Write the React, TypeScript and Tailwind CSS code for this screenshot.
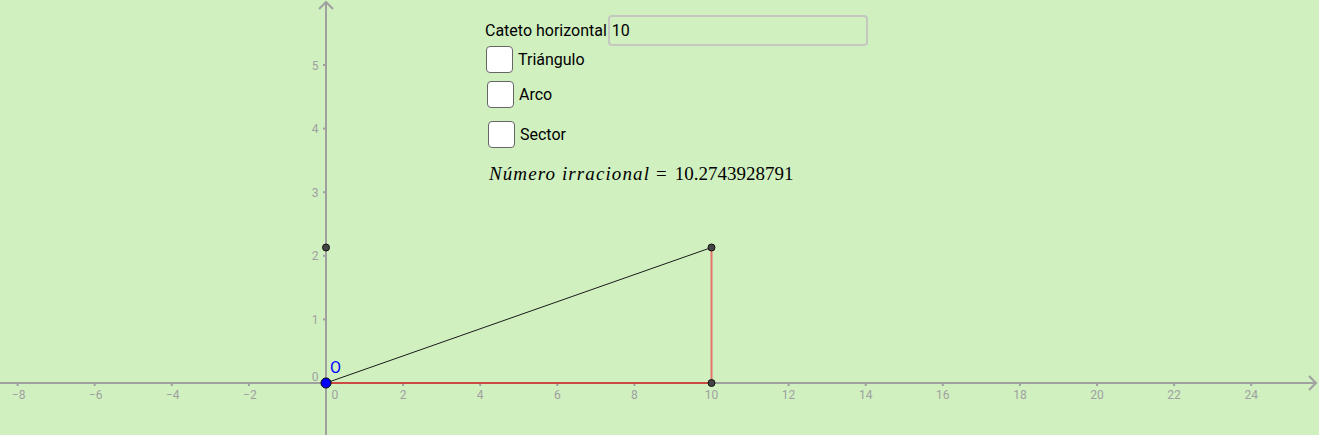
const X0 = 326;
const Y0 = 383;
const UX = 38.55;
const UY = 63.6;

const sx = (v: number) => X0 + v * UX;
const sy = (v: number) => Y0 - v * UY;

const X_TICKS = [-8, -6, -4, -2, 2, 4, 6, 8, 10, 12, 14, 16, 18, 20, 22, 24];
const Y_TICKS = [1, 2, 3, 4, 5];

const TOP_Y = 247.5;

function Graph() {
  return (
    <svg width={1319} height={435} className="absolute inset-0" style={{ fontFamily: 'Roboto, sans-serif' }}>
      {/* axes */}
      <line x1={0} y1={Y0} x2={1316} y2={Y0} stroke="#a0a0a0" strokeWidth={2} />
      <polyline points={`1309,${Y0 - 7} 1316,${Y0} 1309,${Y0 + 7}`} fill="none" stroke="#a0a0a0" strokeWidth={2} />
      <line x1={X0} y1={2} x2={X0} y2={435} stroke="#a0a0a0" strokeWidth={2} />
      <polyline points={`${X0 - 7},9 ${X0},2 ${X0 + 7},9`} fill="none" stroke="#a0a0a0" strokeWidth={2} />

      {X_TICKS.map((t) => (
        <g key={`x${t}`}>
          <line x1={sx(t)} y1={Y0} x2={sx(t)} y2={Y0 + 3} stroke="#a0a0a0" strokeWidth={2} />
          <text x={sx(t) + (t < 0 ? 1 : 0)} y={399} fontSize={12} fill="#a0a0a0" textAnchor="middle">
            {t < 0 ? `\u2212${-t}` : t}
          </text>
        </g>
      ))}
      {Y_TICKS.map((t) => (
        <g key={`y${t}`}>
          <line x1={X0 - 3} y1={sy(t)} x2={X0} y2={sy(t)} stroke="#a0a0a0" strokeWidth={2} />
          <text x={318.5} y={sy(t) + 4.5} fontSize={12} fill="#a0a0a0" textAnchor="end">
            {t}
          </text>
        </g>
      ))}
      <text x={318.5} y={381} fontSize={12} fill="#a0a0a0" textAnchor="end">0</text>
      <text x={331.5} y={399} fontSize={12} fill="#a0a0a0">0</text>

      {/* triangle */}
      <line x1={X0} y1={Y0} x2={sx(10)} y2={Y0} stroke="#cc4a44" strokeWidth={2} />
      <line x1={sx(10)} y1={Y0} x2={sx(10)} y2={TOP_Y} stroke="#e4746a" strokeWidth={2} />
      <line x1={X0} y1={Y0} x2={sx(10)} y2={TOP_Y} stroke="#1a1a1a" strokeWidth={1} />

      {/* points */}
      <circle cx={sx(10)} cy={TOP_Y} r={3.5} fill="#444" stroke="#111" strokeWidth={1} />
      <circle cx={sx(10)} cy={Y0} r={3.5} fill="#444" stroke="#111" strokeWidth={1} />
      <circle cx={X0} cy={TOP_Y} r={3.5} fill="#444" stroke="#111" strokeWidth={1} />
      <circle cx={X0} cy={Y0} r={5} fill="#0000ff" stroke="#000" strokeWidth={1} />
      <text x={330} y={373} fontSize={16} fill="#0000ff">O</text>
    </svg>
  );
}

function Check({ label, className }: { label: string; className?: string }) {
  return (
    <label className={`flex items-center gap-[5px] ${className ?? ''}`}>
      <span className="block w-[27px] h-[27px] rounded-[4px] border border-[#666] bg-white" />
      <span>{label}</span>
    </label>
  );
}

export default function App() {
  return (
    <div className="relative w-[1319px] h-[435px] overflow-hidden bg-[#d0f0c0]">
      <Graph />
      <div className="absolute left-[485px] top-[15px] flex flex-col text-[16px] text-black font-['Roboto',sans-serif]">
        <div className="flex items-center h-[31px]">
          <span>Cateto horizontal</span>
          <div className="ml-[1px] w-[260px] h-[31px] rounded-[4px] border-2 border-[#c4c8c0] pl-[2px] flex items-center">
            10
          </div>
        </div>
        <Check label="Triángulo" className="ml-[1px] mt-0" />
        <Check label="Arco" className="ml-[2px] mt-[8px]" />
        <Check label="Sector" className="ml-[3px] mt-[13px]" />
        <div className="mt-[12px] ml-[4px] text-[19px] font-['Liberation_Serif',serif] whitespace-nowrap">
          <span className="italic tracking-[1.1px]">Número irracional</span>
          <span className="ml-[6px] mr-[8px]">=</span>
          <span>10.2743928791</span>
        </div>
      </div>
    </div>
  );
}
